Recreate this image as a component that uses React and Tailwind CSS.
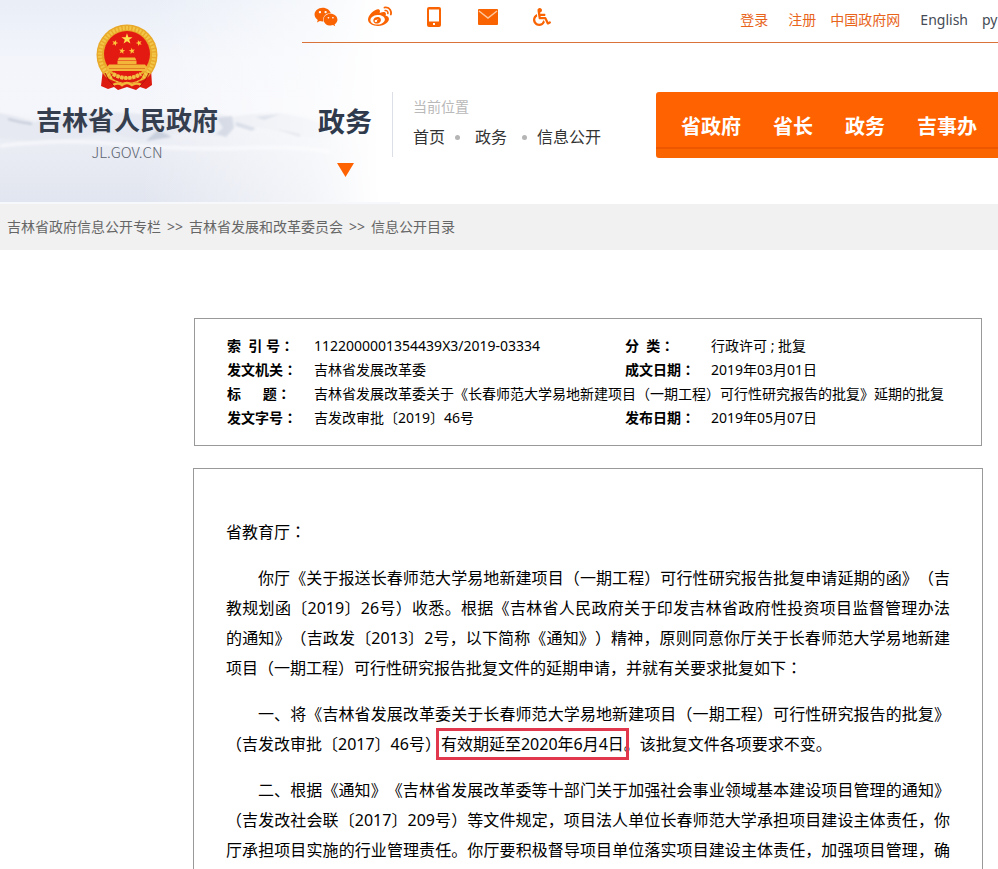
import React from 'react';
import { FaWeixin, FaWeibo, FaWheelchair } from 'react-icons/fa';

function Colon() {
  return <span lang="ja" className="leading-none font-['Noto_Sans_CJK_JP',sans-serif]">：</span>;
}

function Emblem() {
  const star = '0,-5 1.2,-1.6 4.8,-1.6 1.9,0.6 3,4 0,1.9 -3,4 -1.9,0.6 -4.8,-1.6 -1.2,-1.6';
  return (
    <svg width="64" height="68" viewBox="0 0 64 68" role="img" aria-label="国徽">
      <path d="M8 46 L56 46 L57 62 L51 66 L45 64 L41 67 L32 64 L23 67 L19 64 L13 66 L6 63 Z" fill="#dc1a10" />
      <circle cx="32" cy="32" r="30.5" fill="#e9a92a" />
      <circle cx="32" cy="32" r="27" fill="none" stroke="#f3c648" strokeWidth="4" strokeDasharray="2 1.4" />
      <circle cx="32" cy="31" r="23" fill="#e31a12" />
      <polygon points={star} fill="#ffe14d" transform="translate(32 16) scale(1.15)" />
      <polygon points={star} fill="#ffc93c" transform="translate(20 20) rotate(20) scale(.65)" />
      <polygon points={star} fill="#ffc93c" transform="translate(44 20) rotate(-20) scale(.65)" />
      <polygon points={star} fill="#ffc93c" transform="translate(27 28) rotate(10) scale(.65)" />
      <polygon points={star} fill="#ffc93c" transform="translate(37 28) rotate(-10) scale(.65)" />
      <path d="M24 34.500h16l1.500 3h-19z M22.500 38h19v3.500h8.500l3 4l-2 2.500H13l-2-2.500l3-4h8.500z" fill="#f3b63a" />
      <path d="M20 41.500h24M14 45.500h36" stroke="#d9741c" strokeWidth=".8" />
      <path d="M15 50 Q32 62 49 50 L46 56 Q32 64 18 56 Z" fill="#dc1a10" />
      <path d="M18 51 Q32 59 46 51" fill="none" stroke="#f2c046" strokeWidth="4" strokeDasharray="3 1" />
      <path d="M12 55 Q32 66 52 55 L54 64 L10 64 Z" fill="#dc1a10" />
      <path d="M18 62 q5-3 9 0 q5-4 10 0 q5-3 9 0" fill="none" stroke="#f2b83a" strokeWidth="2.600" />
      <path d="M10 50 q3 8 9 13 M54 50 q-3 8 -9 13" fill="none" stroke="#b60f0a" strokeWidth="1" />
    </svg>
  );
}

function HeaderScenery() {
  return (
    <svg className="absolute inset-y-0 left-0 h-full w-[400px]" viewBox="0 0 400 204" preserveAspectRatio="none" aria-hidden="true">
      <defs>
        <linearGradient id="sky" x1="0" y1="0" x2="0" y2="1">
          <stop offset="0" stopColor="#e9eef7" />
          <stop offset=".3" stopColor="#f3f5fb" />
          <stop offset=".55" stopColor="#f5f6fb" />
          <stop offset=".65" stopColor="#eceef5" />
          <stop offset="1" stopColor="#e1e5ef" />
        </linearGradient>
        <linearGradient id="fade" x1="0" y1="0" x2="1" y2="0">
          <stop offset=".35" stopColor="#fff" stopOpacity="0" />
          <stop offset=".78" stopColor="#fff" stopOpacity=".6" />
          <stop offset=".95" stopColor="#fff" />
        </linearGradient>
        <filter id="mist"><feGaussianBlur stdDeviation="1.2" /></filter>
      </defs>
      <rect width="400" height="204" fill="url(#sky)" />
      <g filter="url(#mist)">
        <path d="M-5 112 L14 116 L34 122 L60 116 L95 112 L130 113 L155 116 L185 113 L215 113 L232 117 L252 114 L280 113 L305 118 L330 128 L330 140 L300 136 L270 130 L240 124 L218 137 L190 132 L160 136 L142 140 L110 134 L40 142 L-5 138 Z" fill="#e6e9f1" />
        <path d="M8 119l12 3 12 2" fill="none" stroke="#c3cad8" strokeWidth="2" />
        <path d="M146 141l12-11 14 7z M217 118l15-2 2 12-8 9-10-3 7-6z M236 122l20 6-4 3-16-5z M256 117l24-3-16 6z M276 129l24 5v3z" fill="#c5ccdb" />
        <path d="M0 146 Q60 138 120 144 T240 148 T330 152" fill="none" stroke="#f4f5fa" strokeWidth="4" />
      </g>
      <rect width="400" height="204" fill="url(#fade)" />
      <rect y="202" width="400" height="2" fill="#f7f8fb" />
    </svg>
  );
}

function PhoneIcon() {
  return (
    <svg width="14" height="20" viewBox="0 0 14 20" aria-hidden="true">
      <path fillRule="evenodd" fill="#f96302" d="M2 0h10a2 2 0 0 1 2 2v16a2 2 0 0 1-2 2H2a2 2 0 0 1-2-2V2a2 2 0 0 1 2-2z M2 2.500v12h10v-12z M6 16v2h2v-2z" />
    </svg>
  );
}

function MailIcon() {
  return (
    <svg width="20" height="16" viewBox="0 0 20 16" aria-hidden="true">
      <rect width="20" height="16" rx="1" fill="#f96302" />
      <path d="M1 2l9 7 9-7" fill="none" stroke="#ffc79e" strokeWidth="1.500" />
    </svg>
  );
}

const shortcuts = [
  ['微信', <FaWeixin size={24} />],
  ['微博', <FaWeibo size={24} />],
  ['手机版', <PhoneIcon />],
  ['邮箱', <MailIcon />],
  ['无障碍', <FaWheelchair size={18} />],
];

function TopBar() {
  return (
    <div className="flex h-[43px] border-b border-[#d9733a]">
      <div className="flex h-[34px]">
        {shortcuts.map(([label, icon]) => (
          <a key={label} href="#" aria-label={label} className="mr-[6px] flex w-12 items-center justify-center text-[#f96302]">
            {icon}
          </a>
        ))}
      </div>
      <div className="ml-auto flex shrink-0 pt-2 text-sm leading-6 whitespace-nowrap text-[#e8641b]">
        <a href="#">登录</a>
        <a href="#" className="ml-5">注册</a>
        <a href="#" className="ml-[14px]">中国政府网</a>
        <a href="#" className="ml-5 text-[#444b55]">English</a>
        <a href="#" className="ml-[14px] w-4 overflow-hidden text-[#444b55]">py</a>
      </div>
    </div>
  );
}

function Header() {
  return (
    <header className="relative flex h-[204px]">
      <HeaderScenery />
      <a href="#" className="relative flex w-[302px] shrink-0 flex-col items-center pt-[23px] pr-12">
        <Emblem />
        <span className="mt-2 text-[26px] leading-[42px] font-bold whitespace-nowrap text-[#353e4f]">吉林省人民政府</span>
        <span className="text-[15px] leading-[22px] font-light text-[#5c6470] font-['Noto_Sans_CJK_SC',sans-serif]">JL.GOV.CN</span>
      </a>
      <div className="relative min-w-0 flex-1">
        <TopBar />
        <div className="flex pt-[49px]">
          <button type="button" className="flex h-[65px] w-[91px] shrink-0 flex-col items-center border-r border-[#dcdfe6] pr-1 text-[27px] leading-[60px] font-bold text-[#2f3a4c]">
            政务
            <svg width="17" height="14" viewBox="0 0 17 14" className="mt-[11px] shrink-0" aria-hidden="true">
              <path d="M0 0h17L8.500 14z" fill="#ff6200" />
            </svg>
          </button>
          <nav aria-label="当前位置" className="ml-5 w-[243px] shrink-0">
            <p className="pt-[3px] text-sm leading-6 text-[#b9b9b9]">当前位置</p>
            <div className="mt-[6px] flex items-center text-base leading-6 text-[#333]">
              <a href="#">首页</a>
              <i className="mr-[15px] ml-[10px] size-[5px] rounded-full bg-[#b5b5b5]" />
              <a href="#">政务</a>
              <i className="mr-[10px] ml-[15px] size-[5px] rounded-full bg-[#b5b5b5]" />
              <a href="#">信息公开</a>
            </div>
          </nav>
          <nav aria-label="主导航" className="flex h-[66px] min-w-0 flex-1 gap-8 overflow-hidden rounded-l-[3px] border-b-[9px] border-[#fb6500] bg-[#ff6200] pt-1 pl-[25px] text-xl leading-[62px] font-bold whitespace-nowrap text-white shadow-[inset_0_-2px_0_#ee5600]">
            <a href="#">省政府</a>
            <a href="#">省长</a>
            <a href="#">政务</a>
            <a href="#">吉事办</a>
          </nav>
        </div>
      </div>
    </header>
  );
}

function Th({ children }) {
  return <th scope="row" className="p-0 text-left font-bold whitespace-pre">{children}</th>;
}

function Td({ children, span }) {
  return <td colSpan={span} className="p-0 whitespace-nowrap">{children}</td>;
}

function InfoTable() {
  return (
    <div className="mx-px border border-[#999] py-[15px] pl-8">
      <table className="w-full table-fixed text-sm leading-6">
        <colgroup>
          <col className="w-[87px]" />
          <col className="w-[311px]" />
          <col className="w-[86px]" />
          <col />
        </colgroup>
        <tbody>
          <tr><Th>索{'  '}引 号<Colon /></Th><Td>1122000001354439X3/2019-03334</Td><Th>分{'  '}类<Colon /></Th><Td>行政许可 ; 批复</Td></tr>
          <tr><Th>发文机关<Colon /></Th><Td>吉林省发展改革委</Td><Th>成文日期<Colon /></Th><Td>2019年03月01日</Td></tr>
          <tr><Th>标{'      '}题<Colon /></Th><Td span={3}>吉林省发展改革委关于《长春师范大学易地新建项目（一期工程）可行性研究报告的批复》延期的批复</Td></tr>
          <tr><Th>发文字号<Colon /></Th><Td>吉发改审批〔2019〕46号</Td><Th>发布日期<Colon /></Th><Td>2019年05月07日</Td></tr>
        </tbody>
      </table>
    </div>
  );
}

function Article() {
  return (
    <article className="mt-[22px] flex-1 space-y-4 border border-b-0 border-[#999] px-8 pt-12 text-justify text-base leading-[30px]">
      <p>省教育厅<Colon /></p>
      <p className="indent-8">
        你厅《关于报送长春师范大学易地新建项目（一期工程）可行性研究报告批复申请延期的函》（吉教规划函〔2019〕26号）收悉。根据《吉林省人民政府关于印发吉林省政府性投资项目监督管理办法的通知》（吉政发〔2013〕2号，以下简称《通知》）精神，原则同意你厅关于长春师范大学易地新建项目（一期工程）可行性研究报告批复文件的延期申请，并就有关要求批复如下<Colon />
      </p>
      <p className="indent-8">
        一、将《吉林省发展改革委关于长春师范大学易地新建项目（一期工程）可行性研究报告的批复》（吉发改审批〔2017〕46号）<span className="relative whitespace-nowrap">有效期延至2020年6月4日<span className="absolute -inset-x-[5px] -inset-y-[5px] border-3 border-[#e2384d]" /></span>。该批复文件各项要求不变。
      </p>
      <p className="indent-8 [text-align-last:justify]">
        二、根据《通知》《吉林省发展改革委等十部门关于加强社会事业领域基本建设项目管理的通知》（吉发改社会联〔2017〕209号）等文件规定，项目法人单位长春师范大学承担项目建设主体责任，你厅承担项目实施的行业管理责任。你厅要积极督导项目单位落实项目建设主体责任，加强项目管理，确
      </p>
    </article>
  );
}

export default function App() {
  return (
    <div lang="zh-CN" className="flex min-h-screen flex-col overflow-x-hidden bg-white text-black font-['Noto_Sans','Noto_Sans_CJK_SC',sans-serif] [text-spacing-trim:space-all]">
      <Header />
      <nav aria-label="面包屑" className="flex h-[46px] items-center gap-[6px] bg-[#f1f1f1] px-[7px] text-sm text-[#666]">
        <a href="#">吉林省政府信息公开专栏</a>
        <span>&gt;&gt;</span>
        <a href="#">吉林省发展和改革委员会</a>
        <span>&gt;&gt;</span>
        <a href="#">信息公开目录</a>
      </nav>
      <main className="mt-[68px] mr-[15px] ml-[193px] flex flex-1 flex-col">
        <InfoTable />
        <Article />
      </main>
    </div>
  );
}
